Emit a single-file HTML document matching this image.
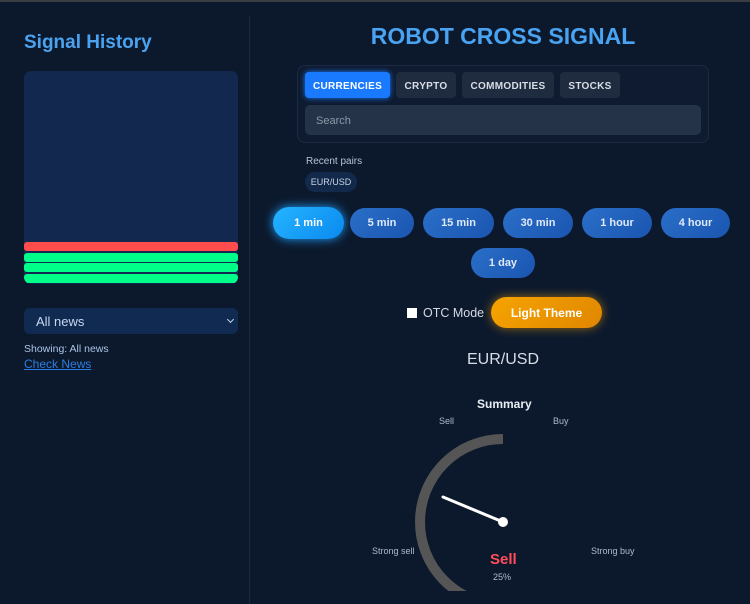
<!DOCTYPE html>
<html><head><meta charset="utf-8"><style>
*{box-sizing:border-box;margin:0;padding:0}
body{width:750px;height:604px;background:#0c192d;font-family:"Liberation Sans",sans-serif;position:relative;overflow:hidden;color:#fff}
.topbar{position:absolute;left:0;top:0;width:750px;height:2px;background:#3a3d42}
.div{position:absolute;left:249px;top:16px;width:1px;height:588px;background:#1b2a40}
h2{position:absolute;left:24px;top:32px;font-size:19px;color:#4aa3f0;font-weight:bold}
.chart{position:absolute;left:24px;top:71px;width:214px;height:213px;background:#12284f;border-radius:7px;overflow:hidden}
.bar{position:absolute;left:0;width:214px;height:9px;border-radius:3px}
.sel{position:absolute;left:24px;top:308px;width:214px;height:26px;background:#102a52;border-radius:6px;color:#c8d8f0;font-size:13px;padding:6px 12px}
.sel:after{content:"";position:absolute;right:5px;top:9px;width:4px;height:4px;border-right:1.5px solid #c8d8f0;border-bottom:1.5px solid #c8d8f0;transform:rotate(45deg)}
.show{position:absolute;left:24px;top:343px;font-size:10.5px;color:#a9c4e6}
.link{position:absolute;left:24px;top:357px;font-size:12px;color:#2a7de0;text-decoration:underline}
h1{position:absolute;left:250px;width:506px;text-align:center;top:23px;font-size:23px;color:#4aa3f0;font-weight:bold}
.panel{position:absolute;left:297px;top:65px;width:412px;height:78px;border:1px solid #1c2b42;border-radius:8px;background:#0e1b30}
.tab{position:absolute;top:72px;height:26px;border-radius:4px;background:#1f2c40;color:#d8dde6;font-size:10px;font-weight:bold;text-align:center;line-height:27px;letter-spacing:.3px;padding-top:1px}
.search{position:absolute;left:305px;top:105px;width:396px;height:30px;background:#253349;border-radius:5px;color:#8d98a8;font-size:11px;padding:10px 11px}
.rp{position:absolute;left:306px;top:156px;font-size:10px;color:#b8c4d4}
.chip{position:absolute;left:305px;top:172px;width:52px;height:20px;border-radius:10px;background:#13294b;color:#c8d4e4;font-size:9px;text-align:center;line-height:21px}
.tf{position:absolute;height:30px;border-radius:15px;background:linear-gradient(135deg,#2a6fc9,#1a55b0);color:#dfe9f8;font-size:11px;font-weight:bold;text-align:center;line-height:31px}
.tf.a{background:linear-gradient(135deg,#25b4ff,#0a8af0);color:#fff;box-shadow:0 0 10px #1ea0ff}
.otc{position:absolute;left:407px;top:306px;font-size:12.5px;color:#d4dae4}
.otc i{display:inline-block;width:10px;height:10px;background:#fff;vertical-align:-1px;margin-right:6px}
.lt{position:absolute;left:491px;top:297px;width:111px;height:31px;border-radius:16px;background:linear-gradient(135deg,#f6a400,#e08600);box-shadow:0 0 10px rgba(245,160,0,.6);color:#fff;font-size:12px;font-weight:bold;text-align:center;line-height:32px}
.pair{position:absolute;left:250px;width:506px;text-align:center;top:351px;font-size:16px;color:#d8dee8}
.t{position:absolute;font-size:9px;color:#b0bac8}
</style></head><body>
<div class="topbar"></div><div class="div"></div>
<h2>Signal History</h2>
<div class="chart">
<div class="bar" style="top:171px;background:#ff4d4d"></div>
<div class="bar" style="top:182px;background:#00ff88"></div>
<div class="bar" style="top:192px;background:#00ff88"></div>
<div class="bar" style="top:203px;background:#00ff88"></div>
</div>
<div class="sel">All news</div>
<div class="show">Showing: All news</div>
<div class="link">Check News</div>
<h1>ROBOT CROSS SIGNAL</h1>
<div class="panel"></div>
<div class="tab" style="left:305px;width:85px;background:#1a7aff;color:#fff;box-shadow:0 0 6px #1a7aff">CURRENCIES</div>
<div class="tab" style="left:396px;width:60px">CRYPTO</div>
<div class="tab" style="left:462px;width:92px">COMMODITIES</div>
<div class="tab" style="left:560px;width:60px">STOCKS</div>
<div class="search">Search</div>
<div class="rp">Recent pairs</div>
<div class="chip">EUR/USD</div>
<div class="tf a" style="left:273px;top:207px;width:71px;height:32px;line-height:32px;border-radius:16px">1 min</div>
<div class="tf" style="left:350px;top:208px;width:64px">5 min</div>
<div class="tf" style="left:423px;top:208px;width:71px">15 min</div>
<div class="tf" style="left:503px;top:208px;width:70px">30 min</div>
<div class="tf" style="left:582px;top:208px;width:70px">1 hour</div>
<div class="tf" style="left:661px;top:208px;width:69px">4 hour</div>
<div class="tf" style="left:471px;top:248px;width:64px">1 day</div>
<div class="otc"><i></i>OTC Mode</div>
<div class="lt">Light Theme</div>
<div class="pair">EUR/USD</div>
<div class="t" style="left:477px;top:397px;font-size:12px;font-weight:bold;color:#e8edf4">Summary</div>
<div class="t" style="left:439px;top:416px">Sell</div>
<div class="t" style="left:553px;top:416px">Buy</div>
<div class="t" style="left:372px;top:546px">Strong sell</div>
<div class="t" style="left:591px;top:546px">Strong buy</div>
<div class="t" style="left:490px;top:551px;font-size:15px;font-weight:bold;color:#ff4d5a">Sell</div>
<div class="t" style="left:493px;top:572px">25%</div>
<svg style="position:absolute;left:0;top:0" width="750" height="604">
<defs><clipPath id="c"><rect x="0" y="0" width="750" height="591"/></clipPath></defs>
<path d="M503 439 A83 83 0 0 0 420 522 A83 83 0 0 0 503 605" fill="none" stroke="#555" stroke-width="10" clip-path="url(#c)"/>
<line x1="443" y1="497" x2="503" y2="522" stroke="#fff" stroke-width="3" stroke-linecap="round"/>
<circle cx="503" cy="522" r="5" fill="#fff"/>
</svg>
</body></html>
